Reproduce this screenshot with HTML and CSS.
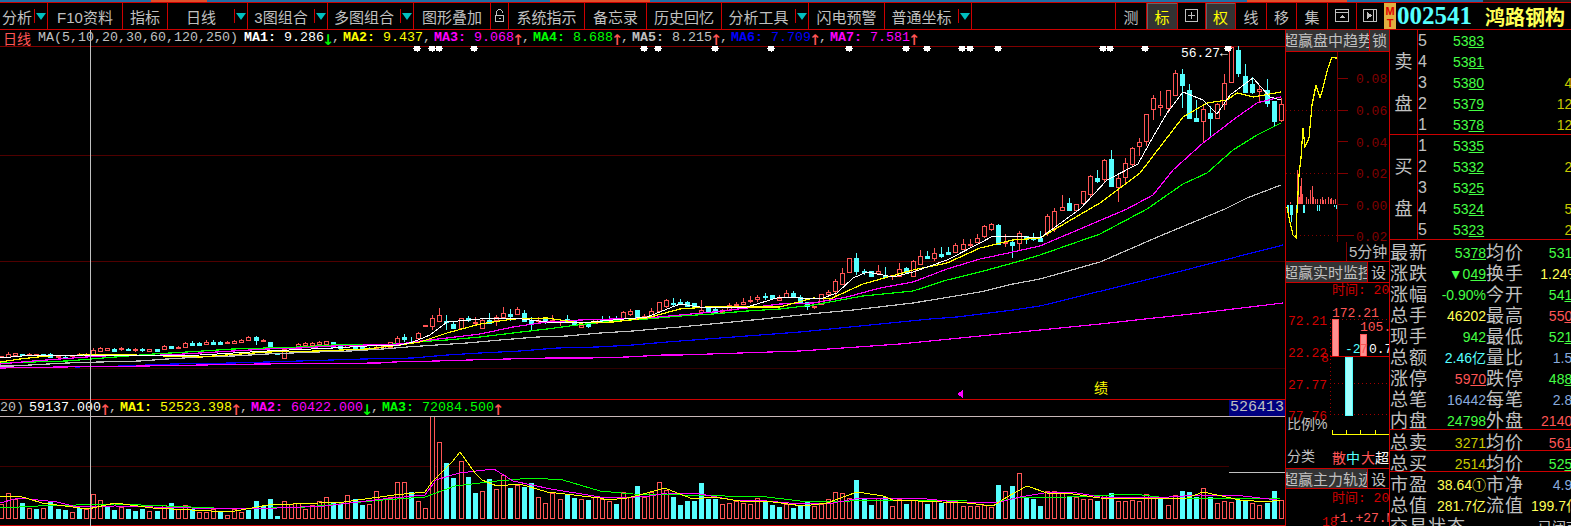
FILE: index.html
```html
<!DOCTYPE html>
<html lang="zh-CN">
<head>
    <meta charset="UTF-8">
    <title>002541 鸿路钢构</title>
    <link rel="stylesheet" href="styles.css">
</head>
<body>
    <div class="top-stripe"></div>

    <div class="toolbar">
        <div class="tool w48"><span class="tool-name">分析</span><span class="tool-arrow"></span></div>
        <div class="tool w75"><span class="tool-name">F10资料</span></div>
        <div class="tool w45"><span class="tool-name">指标</span></div>
        <div class="tool w80"><span class="tool-name">日线</span><span class="tool-arrow"></span></div>
        <div class="tool w80"><span class="tool-name">3图组合</span><span class="tool-arrow"></span></div>
        <div class="tool w86"><span class="tool-name">多图组合</span><span class="tool-arrow"></span></div>
        <div class="tool w77"><span class="tool-name">图形叠加</span></div>
        <div class="tool w18">
            <svg width="11" height="14" viewBox="0 0 11 14" class="ico"><path d="M2.5 6V3.5a3 3 0 0 1 6 0V4M1.500 6.500h8v6h-8zM4.500 9.500h2"/></svg>
        </div>
        <div class="tool w76"><span class="tool-name">系统指示</span></div>
        <div class="tool w62"><span class="tool-name">备忘录</span></div>
        <div class="tool w75"><span class="tool-name">历史回忆</span></div>
        <div class="tool w87"><span class="tool-name">分析工具</span><span class="tool-arrow"></span></div>
        <div class="tool w76"><span class="tool-name">闪电预警</span></div>
        <div class="tool w87"><span class="tool-name">普通坐标</span><span class="tool-arrow"></span></div>

        <div class="tools-right">
            <div class="tool w31"><span class="tool-name">测</span></div>
            <div class="tool w31 active"><span class="tool-name">标</span></div>
            <div class="tool w28">
                <svg width="14" height="14" viewBox="0 0 14 14" class="ico"><path d="M.5.500h12v12h-12zM6.500 3v7M3 6.500h7"/></svg>
            </div>
            <div class="tool w30 active"><span class="tool-name">权</span></div>
            <div class="tool w31"><span class="tool-name">线</span></div>
            <div class="tool w30"><span class="tool-name">移</span></div>
            <div class="tool w31"><span class="tool-name">集</span></div>
            <div class="tool w29">
                <svg width="15" height="14" viewBox="0 0 15 14" class="ico"><path d="M.5.500h13v12h-13zM.5 3.500h13"/><path class="ico-fill" d="M7 6l-3 3h6z"/></svg>
            </div>
            <div class="tool w28">
                <svg width="15" height="14" viewBox="0 0 15 14" class="ico"><path d="M.5.500h13v12h-13zM10.500.500v12"/><path class="ico-fill" d="M4 3l5 3.500L4 10z"/></svg>
            </div>
        </div>

        <div class="stock">
            <div class="mt-badge"><span>M</span><span>T</span></div>
            <div class="stock-code">002541</div>
            <div class="stock-name">鸿路钢构</div>
        </div>
    </div>

    <div class="screen">
        <div class="chart-col">
            <div class="legend">
                <span class="period">日线</span>
                <span class="params">MA(5,10,20,30,60,120,250)</span>
                <span class="c-white"><b>MA1:</b> 9.286</span><span class="down">↓</span><span class="comma">,</span>
                <span class="c-yellow"><b>MA2:</b> 9.437</span><span class="comma">,</span>
                <span class="c-magenta"><b>MA3:</b> 9.068</span><span class="up">↑</span><span class="comma">,</span>
                <span class="c-lime"><b>MA4:</b> 8.688</span><span class="up">↑</span><span class="comma">,</span>
                <span class="c-gray"><b>MA5:</b> 8.215</span><span class="up">↑</span><span class="comma">,</span>
                <span class="c-blue"><b>MA6:</b> 7.709</span><span class="up">↑</span><span class="comma">,</span>
                <span class="c-magenta"><b>MA7:</b> 7.581</span><span class="up">↑</span>
            </div>
            <svg id="kline" class="plot" width="1285" height="353" viewBox="0 46 1285 353"></svg>
            <div class="legend vol-legend">
                <span class="vol-name">20)</span>
                <span class="c-white">59137.000</span><span class="up">↑</span><span class="comma">,</span>
                <span class="c-yellow"><b>MA1:</b> 52523.398</span><span class="up">↑</span><span class="comma">,</span>
                <span class="c-magenta"><b>MA2:</b> 60422.000</span><span class="down">↓</span><span class="comma">,</span>
                <span class="c-lime"><b>MA3:</b> 72084.500</span><span class="up">↑</span>
                <span class="vol-max">526413</span>
            </div>
            <svg id="volume" class="plot" width="1285" height="109" viewBox="0 417 1285 109"></svg>
            <div class="crosshair"></div>
        </div>

        <div class="mini-col">
            <div class="mini-head">
                <div class="mini-title">超赢盘中趋势</div>
                <div class="mini-btn">锁</div>
            </div>
            <svg class="plot" width="103" height="190" viewBox="1286 52 103 190">
                <path class="dark-axis" d="M1337.500 52V242M1337 78.500h11M1337 110.500h11M1337 141.500h11M1337 173.500h11M1337 204.500h11M1337 235.500h17"/>
                <path class="dots" d="M1286 110.500h51M1286 173.500h51M1296 235.500h41"/>
                <text class="ax-dark" x="1356" y="83">0.08</text>
                <text class="ax-dark" x="1356" y="115">0.06</text>
                <text class="ax-dark" x="1356" y="147">0.04</text>
                <text class="ax-dark" x="1356" y="178">0.02</text>
                <text class="ax-dark" x="1356" y="210">0.00</text>
                <text class="ax-dark" x="1356" y="241">0.02</text>
                <path class="bar-red" d="M1290.500 204V202M1297.500 204V170M1298.500 204V193M1299.500 204V197M1300.500 204V186M1301.500 204V178M1302.500 204V194M1306.500 204V197M1308.500 204V199M1310.500 204V190M1312.500 204V186M1313.500 204V197M1315.500 204V199M1317.500 204V199M1320.500 204V199M1322.500 204V197M1323.500 204V200M1325.500 204V199M1328.500 204V197M1330.500 204V199M1331.500 204V198M1333.500 204V200M1335.500 204V199"/>
                <path class="bar-cyan" d="M1287.500 205V208M1288.500 205V218M1290.500 205V215M1291.500 205V222M1292.500 205V215M1296.500 205V211M1303.500 205V213M1304.500 205V213M1317.500 205V211M1319.500 205V211M1334.500 205V207M1336.500 205V209"/>
                <polyline class="ln-yellow" points="1287,207 1290,222 1293,235 1296,238 1297,211 1299,175 1301,158 1303,128 1305,147 1309,138 1312,105 1316,85 1320,98 1323,88 1328,68 1332,57 1335,58 1337,58"/>
            </svg>
            <div class="mini-foot"><span class="foot-box"></span><span class="foot-label">5分钟</span></div>

            <div class="mini-head h22">
                <div class="mini-title">超赢实时监控</div>
                <div class="mini-btn black">设</div>
            </div>
            <svg class="plot" width="103" height="185" viewBox="1286 283 103 185">
                <text class="ax-red" x="1332" y="294">时间: 20</text>
                <path class="dots bright" d="M1330.500 319V415M1330 319.500h59M1330 383.500h59M1330 414.500h59"/>
                <text class="ax-pink" x="1332" y="317">172.21</text>
                <text class="ax-pink" x="1360" y="331">105.</text>
                <text class="ax-red" x="1288" y="325">72.21</text>
                <text class="ax-red" x="1288" y="357">22.22</text>
                <text class="ax-red" x="1321" y="362">8</text>
                <text class="ax-red" x="1288" y="389">27.77</text>
                <text class="ax-red" x="1288" y="420">77.76</text>
                <rect class="pink-bar" x="1332" y="319" width="6" height="37"/>
                <rect class="pink-bar" x="1360" y="334" width="6" height="22"/>
                <rect class="cyan-bar" x="1345" y="357" width="7" height="58"/>
                <path class="red-line" d="M1330 356.500h59"/>
                <text class="ax-cyan" x="1345" y="353">-2</text>
                <text class="ax-pink" x="1360" y="353">7</text>
                <text class="ax-white" x="1369" y="353">0.7</text>
                <text class="cjk-gray" x="1287" y="429">比例%</text>
                <path class="tick-yellow" d="M1332 430v4.500h58M1346.500 430v4M1360.500 430v4M1375.500 430v4"/>
                <text class="cjk-gray" x="1287" y="461">分类</text>
                <text class="cjk-lg pink" x="1332" y="463">散</text>
                <text class="cjk-lg cyan" x="1346" y="463">中</text>
                <text class="cjk-lg pink" x="1361" y="463">大</text>
                <text class="cjk-lg white" x="1375" y="463">超</text>
            </svg>

            <div class="mini-head h19">
                <div class="mini-title">超赢主力轨迹</div>
                <div class="mini-btn black">设</div>
            </div>
            <svg class="plot" width="103" height="37" viewBox="1286 489 103 37">
                <text class="ax-red" x="1332" y="502">时间: 20</text>
                <text class="ax-pink" x="1332" y="522">+1.+27.M12</text>
                <text class="ax-red" x="1322" y="526">18</text>
            </svg>
        </div>

        <div class="quote-col">
            <div class="book">
                <div class="book-side"><span>卖</span><span>盘</span></div>
                <div class="book-rows">
                    <div class="book-row"><span class="lvl">5</span><span class="price">53<u>83</u></span><span class="qty"></span></div>
                    <div class="book-row"><span class="lvl">4</span><span class="price">53<u>81</u></span><span class="qty"></span></div>
                    <div class="book-row"><span class="lvl">3</span><span class="price">53<u>80</u></span><span class="qty">48</span></div>
                    <div class="book-row"><span class="lvl">2</span><span class="price">53<u>79</u></span><span class="qty">127</span></div>
                    <div class="book-row"><span class="lvl">1</span><span class="price">53<u>78</u></span><span class="qty">125</span></div>
                </div>
            </div>
            <div class="book">
                <div class="book-side"><span>买</span><span>盘</span></div>
                <div class="book-rows">
                    <div class="book-row"><span class="lvl">1</span><span class="price">53<u>35</u></span><span class="qty"></span></div>
                    <div class="book-row"><span class="lvl">2</span><span class="price">53<u>32</u></span><span class="qty">28</span></div>
                    <div class="book-row"><span class="lvl">3</span><span class="price">53<u>25</u></span><span class="qty"></span></div>
                    <div class="book-row"><span class="lvl">4</span><span class="price">53<u>24</u></span><span class="qty">53</span></div>
                    <div class="book-row"><span class="lvl">5</span><span class="price">53<u>23</u></span><span class="qty">21</span></div>
                </div>
            </div>

            <div class="stats first">
                <span class="k">最新</span><span class="v green">53<u>78</u></span><span class="k">均价</span><span class="v green">5318</span>
                <span class="k">涨跌</span><span class="v green">▼0<u>49</u></span><span class="k">换手</span><span class="v yellow">1.24%</span>
                <span class="k">涨幅</span><span class="v green">-0.90%</span><span class="k">今开</span><span class="v green">54<u>18</u></span>
                <span class="k">总手</span><span class="v yellow">46202</span><span class="k">最高</span><span class="v red">55<u>00</u></span>
                <span class="k">现手</span><span class="v green">942</span><span class="k">最低</span><span class="v green">52<u>10</u></span>
                <span class="k">总额</span><span class="v cyan">2.46亿</span><span class="k">量比</span><span class="v steel">1.57</span>
                <span class="k">涨停</span><span class="v red">59<u>70</u></span><span class="k">跌停</span><span class="v green">48<u>80</u></span>
                <span class="k">总笔</span><span class="v steel">16442</span><span class="k">每笔</span><span class="v steel">2.81</span>
                <span class="k">内盘</span><span class="v green">24798</span><span class="k">外盘</span><span class="v red">21404</span>
            </div>
            <div class="stats boxed">
                <span class="k">总卖</span><span class="v dim">3271</span><span class="k">均价</span><span class="v red">56<u>10</u></span>
            </div>
            <div class="stats boxed">
                <span class="k">总买</span><span class="v dim">2514</span><span class="k">均价</span><span class="v green">52<u>50</u></span>
            </div>
            <div class="stats">
                <span class="k">市盈</span><span class="v yellow">38.64①</span><span class="k">市净</span><span class="v steel">4.94</span>
                <span class="k">总值</span><span class="v yellow">281.7亿</span><span class="k">流值</span><span class="v yellow">199.7亿</span>
                <span class="k status">交易状态</span><span class="v gray">已闭市</span>
            </div>
        </div>
    </div>

    <script src="script.js"></script>
</body>
</html>
```

FILE: styles.css
```css
* {
  box-sizing: border-box;
}

html, body {
  margin: 0;
  background: #000;
}

body {
  width: 1571px;
  height: 526px;
  overflow: hidden;
  color: #c0c0c0;
  font-family: "Liberation Sans", "Noto Sans CJK SC", sans-serif;
}

.plot {
  display: block;
  shape-rendering: crispEdges;
}

/* window stripe on top */
.top-stripe {
  height: 2px;
  background: linear-gradient(to right,
    #1f6fa8 151px, #e0502a 151px, #e0502a 207px,
    #1f6fa8 207px, #1f6fa8 550px, #e0502a 550px, #e0502a 650px,
    #1f6fa8 650px, #1f6fa8 1247px, #e0502a 1247px, #e0502a 1347px,
    #1f6fa8 1347px, #1f6fa8 1483px, #222 1483px);
}

/* toolbar */
.toolbar {
  display: flex;
  height: 28px;
  border-top: 1px solid #c00;
  border-bottom: 1px solid #c00;
}

.tool {
  display: flex;
  align-items: center;
  justify-content: center;
  flex: none;
  height: 100%;
  border-right: 1px solid #c00;
  font-size: 15px;
}

.tool-name {
  flex: 1;
  text-align: center;
  white-space: nowrap;
}

.tool-arrow {
  display: flex;
  align-items: center;
  justify-content: center;
  flex: none;
  width: 13px;
  height: 14px;
  border-left: 1px solid #c00;
}

.tool-arrow::after {
  content: "";
  border-left: 5px solid transparent;
  border-right: 5px solid transparent;
  border-top: 7px solid #00c0c0;
}

.w18 { width: 18px; }
.w28 { width: 28px; }
.w29 { width: 29px; }
.w30 { width: 30px; }
.w31 { width: 31px; }
.w45 { width: 45px; }
.w48 { width: 48px; }
.w62 { width: 62px; }
.w75 { width: 75px; }
.w76 { width: 76px; }
.w77 { width: 77px; }
.w80 { width: 80px; }
.w86 { width: 86px; }
.w87 { width: 87px; }

.tools-right {
  display: flex;
  height: 100%;
  margin-left: auto;
  border-left: 1px solid #c00;
  width: 269px;
}

.tool.active {
  background: #333;
  color: #ffff00;
  box-shadow: inset 1px 1px 0 #666;
}

.ico {
  fill: none;
  stroke: #c0c0c0;
  shape-rendering: crispEdges;
}

.ico-fill {
  fill: #c0c0c0;
  stroke: none;
}

.stock {
  display: flex;
  align-items: center;
  flex: none;
  width: 187px;
  height: 100%;
}

.mt-badge {
  display: flex;
  flex-direction: column;
  align-items: center;
  width: 12px;
  height: 100%;
  background: #e0b040;
  color: #e00000;
  font-size: 11px;
  font-weight: bold;
  line-height: 12px;
  padding-top: 2px;
}

.stock-code {
  margin-left: 1px;
  width: 88px;
  color: #55ffff;
  font-family: "Liberation Serif", serif;
  font-size: 25px;
  font-weight: bold;
}

.stock-name {
  color: #ffff55;
  font-size: 20px;
  font-weight: bold;
  white-space: nowrap;
}

/* page body under the toolbar */
.screen {
  display: flex;
  height: 496px;
}

.chart-col {
  position: relative;
  flex: none;
  width: 1285px;
}

.legend {
  display: flex;
  height: 16px;
  font-family: "Liberation Mono", monospace;
  font-size: 13.33px;
  line-height: 16px;
  white-space: pre;
}

.legend span {
  flex: none;
}

.period {
  width: 38px;
  padding-left: 3px;
  color: #ff5555;
  font-family: "Noto Sans CJK SC", sans-serif;
  font-size: 14px;
}

.params {
  width: 206px;
}

.legend .up, .legend .down {
  display: flex;
  justify-content: center;
  width: 8px;
  font-family: "DejaVu Sans Mono", monospace;
  font-size: 20px;
}

.up { color: #ff5555; }
.down { color: #00ff00; }
.comma { margin-right: 3px; }

.c-white { color: #fff; }
.c-yellow { color: #ffff00; }
.c-magenta { color: #ff00ff; }
.c-lime { color: #00ff00; }
.c-gray { color: #c0c0c0; }
.c-blue { color: #0000ff; }

.vol-legend {
  height: 18px;
  border-top: 1px solid #c00;
  border-bottom: 1px solid #c8b8b8;
}

.vol-name {
  width: 29px;
}

.legend .vol-max {
  width: 56px;
  margin-left: auto;
  background: #000080;
  color: #c0c0c0;
  font-size: 15px;
  text-align: center;
}

.crosshair {
  position: absolute;
  left: 90px;
  top: 0;
  bottom: 0;
  width: 1px;
  background: #c0c0c0;
}

/* small panels in the middle */
.mini-col {
  flex: none;
  width: 105px;
  border-left: 1px solid #c00;
  border-right: 1px solid #c00;
}

.mini-head {
  display: flex;
  height: 22px;
  background: #333;
  border-bottom: 1px solid #c00;
  font-size: 15px;
  line-height: 21px;
}

.h22 {
  height: 22px;
  border-top: 1px solid #c00;
}

.h19 {
  height: 21px;
  margin-top: 0;
  border-top: 1px solid #c00;
}

.mini-title {
  flex: 1;
  overflow: hidden;
  white-space: nowrap;
  text-indent: -3px;
}

.mini-btn {
  flex: none;
  width: 20px;
  border-left: 1px solid #c00;
  text-align: center;
}

.mini-btn.black {
  width: 22px;
  background: #000;
}

.mini-foot {
  display: flex;
  height: 19px;
  font-size: 15px;
  line-height: 19px;
}

.foot-box {
  width: 61px;
  border-right: 1px solid #800000;
}

.foot-label {
  padding-left: 2px;
  white-space: nowrap;
}

.dark-axis { fill: none; stroke: #800000; }
.dots { fill: none; stroke: #800000; stroke-dasharray: 1 3; }
.dots.bright { stroke: #a00000; }
.bar-red { fill: none; stroke: #ff5555; }
.bar-cyan { fill: none; stroke: #55ffff; }
.ln-yellow { fill: none; stroke: #ffff00; stroke-width: 1.2; }
.red-line { fill: none; stroke: #c00; }
.tick-yellow { fill: none; stroke: #ffff00; }

.pink-bar { fill: #ff9090; stroke: #ff5555; }
.cyan-bar { fill: #a0ffff; stroke: #55ffff; }

.ax-dark, .ax-red, .ax-pink, .ax-cyan, .ax-white {
  font-family: "Liberation Mono", "Noto Sans CJK SC", monospace;
  font-size: 13px;
}

.ax-dark { fill: #800000; }
.ax-red { fill: #d00000; }
.ax-pink { fill: #ff5555; }
.ax-cyan { fill: #55ffff; }
.ax-white { fill: #fff; }

.cjk-gray { fill: #c0c0c0; font-size: 14px; }
.cjk-lg { font-size: 14px; }
.cjk-lg.pink { fill: #ff5555; }
.cjk-lg.cyan { fill: #55ffff; }
.cjk-lg.white { fill: #fff; }

/* quote panel */
.quote-col {
  flex: none;
  width: 182px;
  overflow: hidden;
}

.book {
  display: flex;
  height: 105px;
  border-bottom: 1px solid #c00;
}

.book-side {
  display: flex;
  flex-direction: column;
  gap: 24px;
  flex: none;
  width: 28px;
  padding-top: 23px;
  border-right: 1px solid #c00;
  font-size: 18px;
  line-height: 18px;
  text-align: center;
}

.book-rows {
  flex: 1;
}

.book-row {
  display: flex;
  align-items: center;
  height: 21px;
  font-size: 14px;
}

.lvl {
  width: 35px;
  font-size: 16px;
}

.price {
  color: #44ff44;
}

.qty {
  margin-left: auto;
  margin-right: -8px;
  color: #c8c800;
}

.stats {
  display: grid;
  grid-template-columns: 37px 59px 37px 57px;
  width: 190px;
  grid-auto-rows: 21px;
  padding-top: 3px;
  line-height: 21px;
}

.stats.first {
  height: 190px;
  border-bottom: 1px solid #c00;
  overflow: hidden;
}

.stats.boxed {
  height: 21px;
  border-bottom: 1px solid #c00;
}

.k {
  font-size: 18px;
  letter-spacing: 1px;
  white-space: nowrap;
}

.k.status {
  grid-column: span 3;
}

.v {
  font-size: 14px;
  text-align: right;
  white-space: nowrap;
}

.green { color: #44ff44; }
.yellow { color: #ffff55; }
.dim { color: #c8c800; }
.red { color: #ff5555; }
.cyan { color: #55ffff; }
.steel { color: #88aadd; }
.gray { color: #c0c0c0; }
```

FILE: script.js
```js
// candles: [up, bodyTop, bodyBottom, high, low], one per trading day
const candles = [
  [1,356,357,356,358],[1,354,357,352,357],[1,353,355,353,355],[0,354,355,354,356],[1,354,355,353,355],
  [1,354,355,354,355],[0,354,356,354,356],[0,354,357,353,358],[1,356,357,356,357],[0,357,358,356,359],
  [1,355,356,355,357],[1,354,355,353,356],[1,354,355,353,356],[1,350,355,348,355],[1,348,351,347,352],
  [1,348,350,348,350],[0,349,351,348,351],[1,348,349,347,351],[0,349,350,348,351],[1,349,350,348,352],
  [0,349,350,348,352],[1,349,351,349,351],[0,349,351,349,351],[1,346,349,345,349],[0,346,348,346,349],
  [1,347,348,346,349],[1,343,347,342,347],[0,343,345,341,346],[0,343,345,342,346],[1,342,344,340,345],
  [0,342,344,340,345],[0,342,344,341,344],[1,342,343,341,344],[1,341,343,340,344],[1,340,342,339,343],
  [1,337,340,336,341],[0,337,340,336,345],[1,340,341,339,342],[0,342,347,342,349],[0,353,354,353,354],
  [1,349,358,349,358],[1,348,349,347,350],[1,344,346,343,347],[1,343,345,342,346],[1,343,345,342,346],
  [1,342,344,341,345],[1,341,344,341,345],[0,342,347,342,347],[0,346,348,345,349],[1,345,347,345,348],
  [0,347,348,345,349],[0,347,349,346,349],[0,348,349,347,350],[1,347,348,346,349],[1,346,348,346,348],
  [1,342,347,342,347],[1,338,344,336,345],[0,337,339,334,342],[0,342,343,337,343],[1,333,338,332,340],
  [1,325,326,325,326],[1,318,326,315,330],[1,315,321,308,321],[0,321,322,315,330],[0,324,328,322,328],
  [1,318,328,318,328],[0,318,320,316,322],[1,322,323,317,325],[1,320,328,318,328],[0,320,323,313,323],
  [1,317,320,315,326],[1,313,317,307,317],[0,314,316,309,321],[1,309,314,307,315],[0,313,321,310,321],
  [0,320,323,317,330],[1,320,321,317,323],[0,319,321,318,324],[1,320,322,315,323],[1,321,322,321,326],
  [0,319,322,315,322],[0,321,325,321,326],[1,325,327,325,328],[0,323,326,323,328],[1,319,323,319,323],
  [0,320,321,316,323],[0,319,320,316,321],[0,319,320,316,322],[1,312,318,311,321],[1,311,314,309,316],
  [0,310,317,310,317],[1,316,317,314,318],[1,311,317,308,318],[1,302,311,302,311],[1,300,306,299,308],
  [0,303,304,298,306],[0,302,303,299,304],[0,302,306,301,307],[0,303,307,303,308],[1,310,312,300,312],
  [0,308,311,307,313],[0,309,312,307,313],[1,311,312,309,314],[1,305,310,303,310],[1,304,305,302,307],
  [1,302,304,298,305],[1,300,301,296,303],[1,297,299,295,302],[0,296,297,293,300],[0,295,298,295,300],
  [1,298,300,295,301],[1,293,297,290,297],[0,293,296,291,297],[0,297,302,295,302],[0,302,306,302,310],
  [1,306,307,306,309],[1,294,304,294,305],[1,292,294,290,295],[1,281,291,279,296],[1,273,284,268,284],
  [1,258,272,258,272],[0,258,271,253,275],[0,271,272,269,275],[0,271,276,271,277],[1,271,273,265,273],
  [0,276,277,267,278],[1,275,276,275,280],[1,269,276,263,276],[0,268,272,267,273],[1,261,276,260,276],
  [1,256,264,250,265],[0,256,258,251,259],[1,253,258,248,261],[0,254,256,247,258],[0,252,254,247,255],
  [1,245,252,243,253],[1,244,249,239,250],[1,244,245,239,248],[1,238,242,234,243],[1,226,236,225,238],
  [1,224,229,223,231],[0,225,244,224,244],[1,242,243,234,247],[0,242,245,240,258],[1,233,243,231,251],
  [0,236,239,236,244],[0,238,239,233,241],[0,238,241,231,241],[1,216,232,214,236],[1,211,228,208,232],
  [1,207,210,195,210],[0,203,210,198,210],[1,204,210,204,210],[1,191,203,191,203],[1,176,194,175,197],
  [0,178,181,170,183],[1,160,179,159,182],[0,159,186,150,186],[1,178,187,175,202],[1,163,177,158,183],
  [1,148,164,147,166],[1,142,146,138,156],[1,114,141,114,146],[1,98,109,95,120],[1,105,107,91,116],
  [1,90,108,90,113],[1,73,95,70,95],[0,74,85,69,108],[0,90,118,84,118],[0,118,121,100,121],
  [1,109,121,105,143],[0,113,118,106,136],[1,104,118,103,119],[1,83,104,74,110],[1,47,82,45,83],
  [0,50,73,45,77],[0,76,92,64,92],[0,84,92,77,94],[1,89,91,86,103],[0,90,103,79,107],
  [0,101,121,101,126],[1,104,120,98,122]
];

// volume bars: positive is an up day (hollow red), negative a down day (cyan)
const vols = [
  14,25,19,-15,10,-9,10,-17,-9,-8,6,-10,9,24,18,-12,-8,11,-9,-7,-9,7,-7,13,-15,9,13,-9,6,6,9,-7,3,9,6,-8,
  -17,-12,-19,-2,17,14,15,9,13,17,21,-15,-14,23,-19,-13,14,27,19,21,36,36,-26,17,10,102,76,-55,-40,57,-41,
  -25,27,-39,29,43,-30,33,-31,-35,21,15,25,19,-24,-20,19,-18,21,
  19,17,-14,26,21,-32,21,26,36,28,-21,-13,-17,-17,-35,-19,-19,14,15,17,15,14,20,-17,-13,-11,14,-10,-12,-17,
  12,14,19,26,25,20,-38,-19,-13,20,-21,12,19,-14,18,18,
  -14,17,-15,17,17,12,12,12,13,11,-33,27,-32,45,-20,-19,-12,27,27,26,-21,21,19,19,-17,23,-25,17,17,18,17,
  24,20,-19,13,23,-27,-26,-21,30,-21,15,17,16,-18,-17,15,13,-15,-27,18
];

// moving averages of the price chart: color, x,y points, line width
const priceLines = [
  ["#c0c0c0", "0,366 12,366 30,365 67,363 100,362 140,361 167,359 200,357 233,356 267,354 317,352 350,351 383,349 407,347 437,345 467,343 500,340 537,337 567,336 600,333 633,331 667,328 680,327 763,319 820,313 853,310 913,303 980,292 1013,284 1040,279 1100,262 1160,236 1225,209 1247,198 1281,185", 1.2],
  ["#0000ff", "75,367 123,366 173,364 233,363 300,361 363,359 413,358 447,355 480,353 520,351 557,348 597,347 633,345 667,342 680,341 800,332 900,322 930,319 957,317 1013,310 1040,306 1150,279 1283,245", 1.2],
  ["#ff00ff", "0,368 60,367 145,366 260,364 380,363 393,362 437,361 470,360 507,359 550,358 590,358 627,357 663,355 680,355 800,351 900,344 1000,334 1100,324 1200,313 1283,303", 1.2],
  ["#00ff00", "0,363 33,362 67,361 103,358 153,354 187,352 233,349 267,348 300,347 333,345 400,344 413,342 447,340 480,337 513,333 547,329 577,325 613,321 647,319 680,316 713,314 747,311 780,309 813,305 863,296 913,291 947,280 980,272 1013,263 1040,255 1100,234 1147,209 1183,184 1207,173 1233,150 1257,135 1281,123", 1.2],
  ["#ff00ff", "0,364 33,361 100,356 167,355 200,353 233,351 267,349 300,348 333,346 400,344 413,342 447,338 480,334 513,327 547,322 580,320 613,319 647,318 680,315 713,312 747,308 780,304 813,303 847,297 880,288 913,282 947,269 980,259 1013,252 1040,246 1127,209 1153,195 1173,170 1203,143 1237,117 1257,103 1281,97", 1.2],
  ["#ffff00", "0,362 20,359 47,356 83,355 133,355 200,357 267,352 317,351 367,349 400,345 420,342 447,333 480,324 513,319 547,318 580,323 613,322 647,318 680,309 707,307 780,307 813,298 830,299 863,284 913,270 947,263 980,248 1013,240 1040,238 1100,203 1140,173 1173,130 1183,117 1207,103 1227,100 1237,93 1253,97 1281,92", 1.2],
  ["#ffffff", "0,358 33,355 60,356 83,355 133,356 200,355 267,351 333,348 367,346 400,345 413,342 430,335 447,322 480,319 513,318 547,322 580,323 613,320 647,317 680,304 700,307 747,307 780,297 820,299 837,293 853,278 867,272 893,277 913,272 947,260 980,243 993,236 1013,236 1040,238 1080,209 1107,180 1138,164 1153,137 1167,113 1183,92 1203,100 1217,114 1230,95 1253,78 1270,97 1281,100", 1]
];

const volLines = [
  ["#00ff00", "0,508 38,506 115,504 191,507 237,509 306,507 383,500 425,497 455,486 497,481 532,478 563,480 600,491 633,494 683,495 767,497 800,501 850,501 867,500 917,500 967,501 1000,501 1017,498 1067,497 1133,494 1167,498 1250,498 1280,499", 1],
  ["#ff00ff", "0,503 19,498 38,500 57,502 77,507 115,506 191,508 253,509 325,506 383,499 425,495 436,480 459,473 494,469 513,481 551,489 600,497 620,498 650,496 667,493 700,494 733,500 767,501 800,504 833,503 860,498 917,498 967,503 1000,502 1020,497 1050,492 1077,493 1100,497 1153,498 1200,495 1243,496 1277,500", 1],
  ["#ffff00", "0,496 19,496 42,503 88,509 115,503 153,508 230,512 268,505 344,502 394,495 425,492 432,482 452,462 460,452 475,473 482,480 497,486 520,484 547,492 600,498 607,500 627,498 643,494 665,488 677,493 693,499 713,497 740,501 773,502 803,506 827,503 857,492 883,496 893,500 967,503 993,506 1007,497 1027,486 1047,493 1073,494 1100,498 1143,499 1187,498 1203,492 1217,495 1240,500 1267,502 1280,500", 1]
];

const stars = [417,432,439,474,644,658,715,771,849,906,927,962,970,998,1103,1110,1145,1228];

const RED = "#ff5555";
const CYAN = "#55ffff";

function barX(k) {
  return Math.round(k * 7.07 - 1);
}

function hline(y, x2, color) {
  return `<path d="M0 ${y + 0.5}H${x2}" fill="none" stroke="${color}"/>`;
}

function polyline(line) {
  return `<polyline points="${line[1]}" fill="none" stroke="${line[0]}" stroke-width="${line[2]}"/>`;
}

let out = "";
out += hline(46, 1285, "#800000");
out += hline(155, 1285, "#500000");
out += hline(261, 1285, "#500000");
out += hline(368, 1285, "#300000");

candles.forEach((c, k) => {
  const x = barX(k);
  const color = c[0] ? RED : CYAN;
  out += `<path d="M${x + 2.5} ${c[3]}V${c[4]}" fill="none" stroke="${color}"/>`;
  const h = Math.max(c[2] - c[1], 1);
  if (c[0]) {
    out += `<rect x="${x + 0.5}" y="${c[1] + 0.5}" width="4" height="${h}" fill="#000" stroke="${color}"/>`;
  } else {
    out += `<rect x="${x}" y="${c[1]}" width="5" height="${h + 1}" fill="${color}"/>`;
  }
});

priceLines.forEach((l) => { out += polyline(l); });

stars.forEach((x) => {
  out += `<circle cx="${x}" cy="48" r="3.500" fill="#fff"/>`;
  out += `<path d="M${x - 4} 48h8M${x} 44v8" stroke="#fff"/>`;
});

out += `<text class="ax-white" x="1181" y="57" font-size="13.33">56.27←</text>`;
out += `<polygon points="957,394 963,390 963,398" fill="#ff00ff"/>`;
out += `<text x="1094" y="393" fill="#ffff00" font-size="14">绩</text>`;
document.getElementById("kline").innerHTML = out;

const BASE = 518;
out = hline(466, 1229, "#400000");
out += `<path d="M1229 472.500H1285" fill="none" stroke="#c0c0c0"/>`;
vols.forEach((v, k) => {
  const x = barX(k);
  const h = Math.abs(v);
  if (v > 0) {
    out += `<rect x="${x + 0.5}" y="${BASE - h + 0.5}" width="4" height="${h}" fill="#000" stroke="${RED}"/>`;
  } else {
    out += `<rect x="${x}" y="${BASE - h}" width="5" height="${h + 1}" fill="${CYAN}"/>`;
  }
});
volLines.forEach((l) => { out += polyline(l); });
out += hline(525, 1285, "#c00");
document.getElementById("volume").innerHTML = out;
```
